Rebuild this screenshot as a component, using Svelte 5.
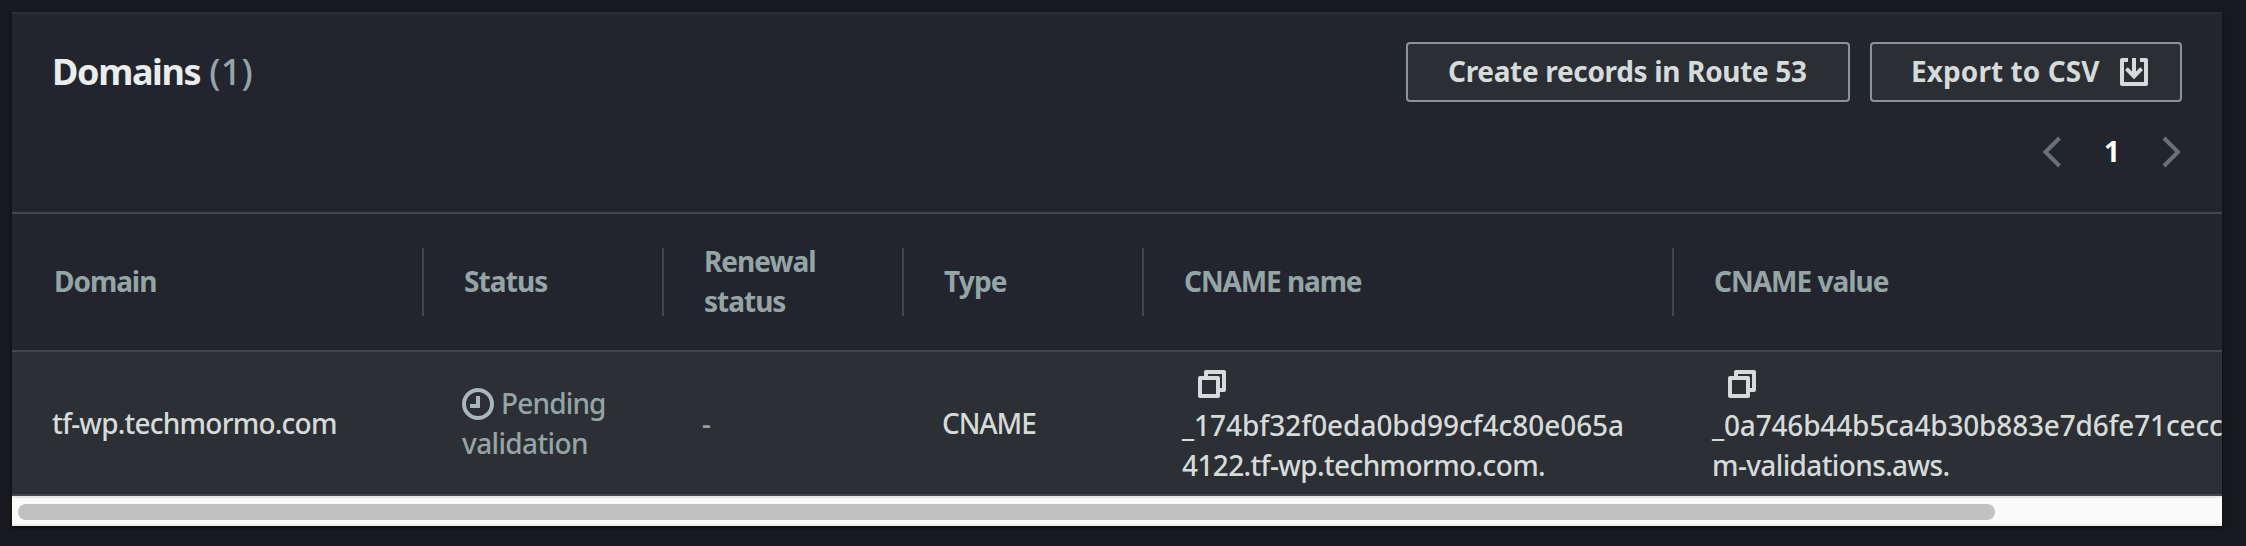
<script>
  const columns = [
    { lines: ['Domain'], spacing: -1.05 },
    { lines: ['Status'], spacing: -0.9 },
    { lines: ['Renewal', 'status'], spacing: -1.0 },
    { lines: ['Type'], spacing: -0.85 },
    { lines: ['CNAME name'], spacing: -1.1 },
    { lines: ['CNAME value'], spacing: -1.0 }
  ];
</script>

{#snippet copyIcon()}
  <svg class="copy" width="28" height="28" viewBox="0 0 28 28" aria-hidden="true">
    <path d="M8 7V2H26V20H21" />
    <rect x="2" y="8" width="18" height="18" />
  </svg>
{/snippet}

<main>
  <section class="panel">
    <header>
      <h2>Domains <span>(1)</span></h2>
      <div class="tools">
        <div class="actions">
          <button class="create">Create records in Route 53</button>
          <button class="export">
            Export to CSV
            <svg width="28" height="28" viewBox="0 0 28 28" aria-hidden="true">
              <path class="tray" d="M8 2H2V26H26V2H20" />
              <path d="M14 0V17M6.4 10.7L14 18.3L21.6 10.7" />
            </svg>
          </button>
        </div>
        <nav>
          <svg width="20" height="32" viewBox="0 0 20 32"><path d="M17.5 2L3.5 16L17.5 30" /></svg>
          <b>1</b>
          <svg width="20" height="32" viewBox="0 0 20 32"><path d="M2 2L16 16L2 30" /></svg>
        </nav>
      </div>
    </header>

    <div class="viewport">
      <div class="row head">
        {#each columns as col}
          <div class="th" style="letter-spacing:{col.spacing}px">
            {#each col.lines as line}<div>{line}</div>{/each}
          </div>
        {/each}
      </div>
      <div class="row body">
        <div class="td domain">tf-wp.techmormo.com</div>
        <div class="td muted">
          <div class="pending">
            <svg width="32" height="32" viewBox="0 0 32 32" aria-hidden="true">
              <circle cx="16" cy="16" r="14" />
              <path d="M16 8V18H8" />
            </svg>
            Pending
          </div>
          <div>validation</div>
        </div>
        <div class="td muted">-</div>
        <div class="td type">CNAME</div>
        <div class="td record">
          {@render copyIcon()}
          <div class="hash">_174bf32f0eda0bd99cf4c80e065a</div>
          <div>4122.tf-wp.techmormo.com.</div>
        </div>
        <div class="td record">
          {@render copyIcon()}
          <div class="hash value">_0a746b44b5ca4b30b883e7d6fe71cecc</div>
          <div>m-validations.aws.</div>
        </div>
      </div>
    </div>
    <div class="scrollbar"><div class="thumb"></div></div>
  </section>
</main>

<style>
  :global(body) {
    background: #18191e;
    overflow: hidden;
  }
  main {
    box-sizing: border-box;
    height: 546px;
    padding: 12px 24px 20px 12px;
    font-family: 'Noto Sans', sans-serif;
    font-size: 28px;
    line-height: 40px;
    color: #d5dbdb;
  }
  .panel {
    box-sizing: border-box;
    height: 514px;
    background: #22252d;
    border-top: 2px solid #2c2f33;
    box-shadow: 0 2px 3px rgba(0, 0, 0, 0.5);
  }
  header {
    box-sizing: border-box;
    height: 200px;
    padding: 28px 40px 0;
    display: flex;
    justify-content: space-between;
    align-items: flex-start;
    border-bottom: 2px solid #43464f;
  }
  h2 {
    margin: 5px 0 0;
    font-size: 36px;
    line-height: 50px;
    font-weight: 700;
    letter-spacing: -1.35px;
    color: #eaeded;
  }
  h2 span {
    margin-left: 1px;
    font-weight: 500;
    letter-spacing: 0.2px;
    color: #95a5a6;
  }
  .tools {
    display: flex;
    flex-direction: column;
    align-items: flex-end;
    gap: 34px;
  }
  .actions {
    display: flex;
    gap: 20px;
  }
  button {
    box-sizing: border-box;
    height: 60px;
    padding: 0 0 2px 40px;
    display: flex;
    align-items: center;
    background: #2b2e33;
    border: 2px solid #879596;
    border-radius: 4px;
    font: 700 28px/40px 'Noto Sans', sans-serif;
    color: #d5dbdb;
    white-space: nowrap;
  }
  .create {
    width: 444px;
    letter-spacing: -0.33px;
  }
  .export {
    width: 312px;
    padding-left: 39px;
    gap: 20px;
    letter-spacing: 0.08px;
  }
  svg {
    display: block;
    flex: none;
    fill: none;
    stroke: currentColor;
    stroke-width: 4;
  }
  .export svg {
    margin-top: 2px;
  }
  .tray {
    stroke-linejoin: round;
  }
  nav {
    display: flex;
    align-items: center;
    height: 32px;
    color: #687078;
  }
  nav b {
    width: 100px;
    text-align: center;
    color: #fff;
    padding-bottom: 2px;
  }
  .viewport {
    overflow: hidden;
  }
  .row {
    box-sizing: border-box;
    width: 2502px;
    display: grid;
    grid-template-columns: 412px 240px 240px 240px 530px 840px;
    align-items: center;
    border-bottom: 2px solid #43464f;
  }
  .head {
    height: 138px;
    font-weight: 700;
    color: #95a5a6;
  }
  .th {
    box-sizing: border-box;
    height: 68px;
    padding: 0 0 2px 40px;
    display: flex;
    flex-direction: column;
    justify-content: center;
    border-right: 2px solid #43464f;
  }
  .th:first-child {
    padding-left: 42px;
  }
  .body {
    height: 144px;
    background: #2c2f33;
    font-weight: 500;
  }
  .td {
    padding-left: 38px;
    letter-spacing: -0.63px;
    white-space: nowrap;
  }
  .domain {
    padding-left: 40px;
    letter-spacing: -0.78px;
  }
  .type {
    letter-spacing: -1.1px;
  }
  .muted {
    color: #95a5a6;
  }
  .pending {
    display: flex;
    align-items: center;
    gap: 7px;
    letter-spacing: -0.85px;
  }
  .pending svg {
    color: #aab7b8;
    margin-top: 2px;
  }
  .record {
    padding-top: 4px;
  }
  .copy {
    margin: 5px 0 7px 16px;
    stroke-linejoin: round;
  }
  .hash {
    letter-spacing: -0.05px;
  }
  .hash.value {
    letter-spacing: -0.18px;
  }
  .scrollbar {
    box-sizing: border-box;
    height: 30px;
    padding: 6px 6px 4px;
    background: #fafafa;
    border-top: 2px solid #e8e8e8;
    border-bottom: 2px solid #ededed;
  }
  .thumb {
    width: 1977px;
    height: 16px;
    border-radius: 8px;
    background: #c1c1c1;
  }
</style>
